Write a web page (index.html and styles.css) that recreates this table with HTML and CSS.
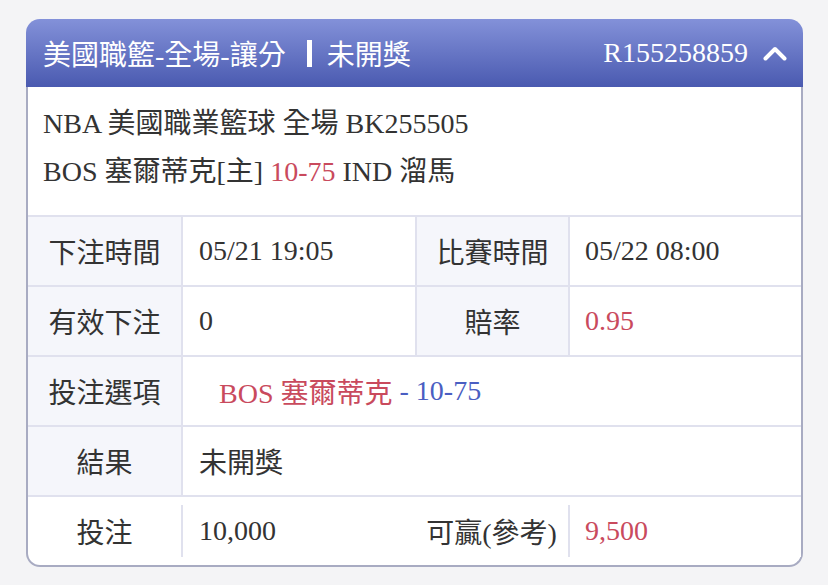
FILE: index.html
```html
<!DOCTYPE html>
<html lang="zh-Hant">
<head>
<meta charset="utf-8">
<title>注單</title>
<link rel="stylesheet" href="styles.css">
</head>
<body>
<div class="card">
  <div class="head">
    <div class="title">美國職籃-全場-讓分<span class="bar"></span>未開獎</div>
    <div class="ref">R155258859<svg class="chev" width="24" height="16" viewBox="0 0 24 16"><polyline points="2.5,13.5 12,4 21.5,13.5" fill="none" stroke="#fff" stroke-width="4" stroke-linecap="round" stroke-linejoin="round"/></svg></div>
  </div>
  <div class="body">
    <div class="info">
      <p>NBA 美國職業籃球 全場 BK255505</p>
      <p>BOS 塞爾蒂克[主] <span class="red">10-75</span> IND 溜馬</p>
    </div>
    <div class="row">
      <div class="cell lab c1">下注時間</div>
      <div class="cell val c2">05/21 19:05</div>
      <div class="cell lab c3">比賽時間</div>
      <div class="cell val c4">05/22 08:00</div>
    </div>
    <div class="row">
      <div class="cell lab c1">有效下注</div>
      <div class="cell val c2">0</div>
      <div class="cell lab c3">賠率</div>
      <div class="cell val c4 red">0.95</div>
    </div>
    <div class="row">
      <div class="cell lab c1">投注選項</div>
      <div class="cell val wide pick"><span class="red">BOS 塞爾蒂克</span>&nbsp;<span class="blue">- 10-75</span></div>
    </div>
    <div class="row">
      <div class="cell lab c1">結果</div>
      <div class="cell val wide">未開獎</div>
    </div>
    <div class="row last">
      <div class="cell lab c1">投注</div>
      <div class="cell val c2">10,000</div>
      <div class="cell lab c3">可贏(參考)</div>
      <div class="cell val c4 red">9,500</div>
    </div>
  </div>
</div>
</body>
</html>
```

FILE: styles.css
```css
html, body {
  margin: 0;
  padding: 0;
  background: #f4f4f6;
}

body {
  font-family: "Liberation Serif", "Noto Sans CJK TC", serif;
  color: #333333;
}

.card {
  margin: 19px 25px 0 26px;
  width: 777px;
}

.head {
  height: 68px;
  box-sizing: border-box;
  display: flex;
  align-items: center;
  justify-content: space-between;
  padding: 0 16px 0 17px;
  background: linear-gradient(#8391d9, #4a5ab0);
  border-radius: 14px 14px 0 0;
  color: #ffffff;
  font-size: 28px;
}

.title {
  display: flex;
  align-items: center;
  white-space: nowrap;
}

.bar {
  display: inline-block;
  width: 5px;
  height: 27px;
  background: #ffffff;
  margin: 0 15px 0 21px;
}

.ref {
  display: flex;
  align-items: center;
  gap: 15px;
}

.chev {
  display: block;
}

.body {
  background: #ffffff;
  border: 2px solid #a8abc2;
  border-top: none;
  border-radius: 0 0 14px 14px;
}

.info {
  padding: 13px 15px 19px;
  font-size: 28px;
  line-height: 48px;
}

.info p {
  margin: 0;
  white-space: nowrap;
}

.red {
  color: #c94a5d;
}

.blue {
  color: #4a5ec2;
}

.row {
  display: flex;
  height: 70px;
  box-sizing: border-box;
  border-top: 2px solid #e0e1ee;
  font-size: 28px;
}

.cell {
  display: flex;
  align-items: center;
  box-sizing: border-box;
  white-space: nowrap;
}

.lab {
  justify-content: center;
  background: #f5f6fb;
}

.val {
  padding-left: 16px;
  background: #ffffff;
}

.c1 {
  width: 153px;
}

.c2 {
  width: 234px;
  border-left: 2px solid #e0e1ee;
}

.c3 {
  width: 153px;
  border-left: 2px solid #e0e1ee;
}

.c4 {
  flex: 1;
  border-left: 2px solid #e0e1ee;
  padding-left: 15px;
}

.wide {
  flex: 1;
  border-left: 2px solid #e0e1ee;
}

.pick {
  padding-left: 36px;
}

.last {
  border-radius: 0 0 12px 12px;
}

.last .lab {
  background: transparent;
}

.last .c2,
.last .c3 {
  border-left: none;
}

.last .c2 {
  margin: 8px 0;
  border-left: 2px solid #e0e1ee;
}

.last .c4 {
  margin: 8px 0;
}
```
